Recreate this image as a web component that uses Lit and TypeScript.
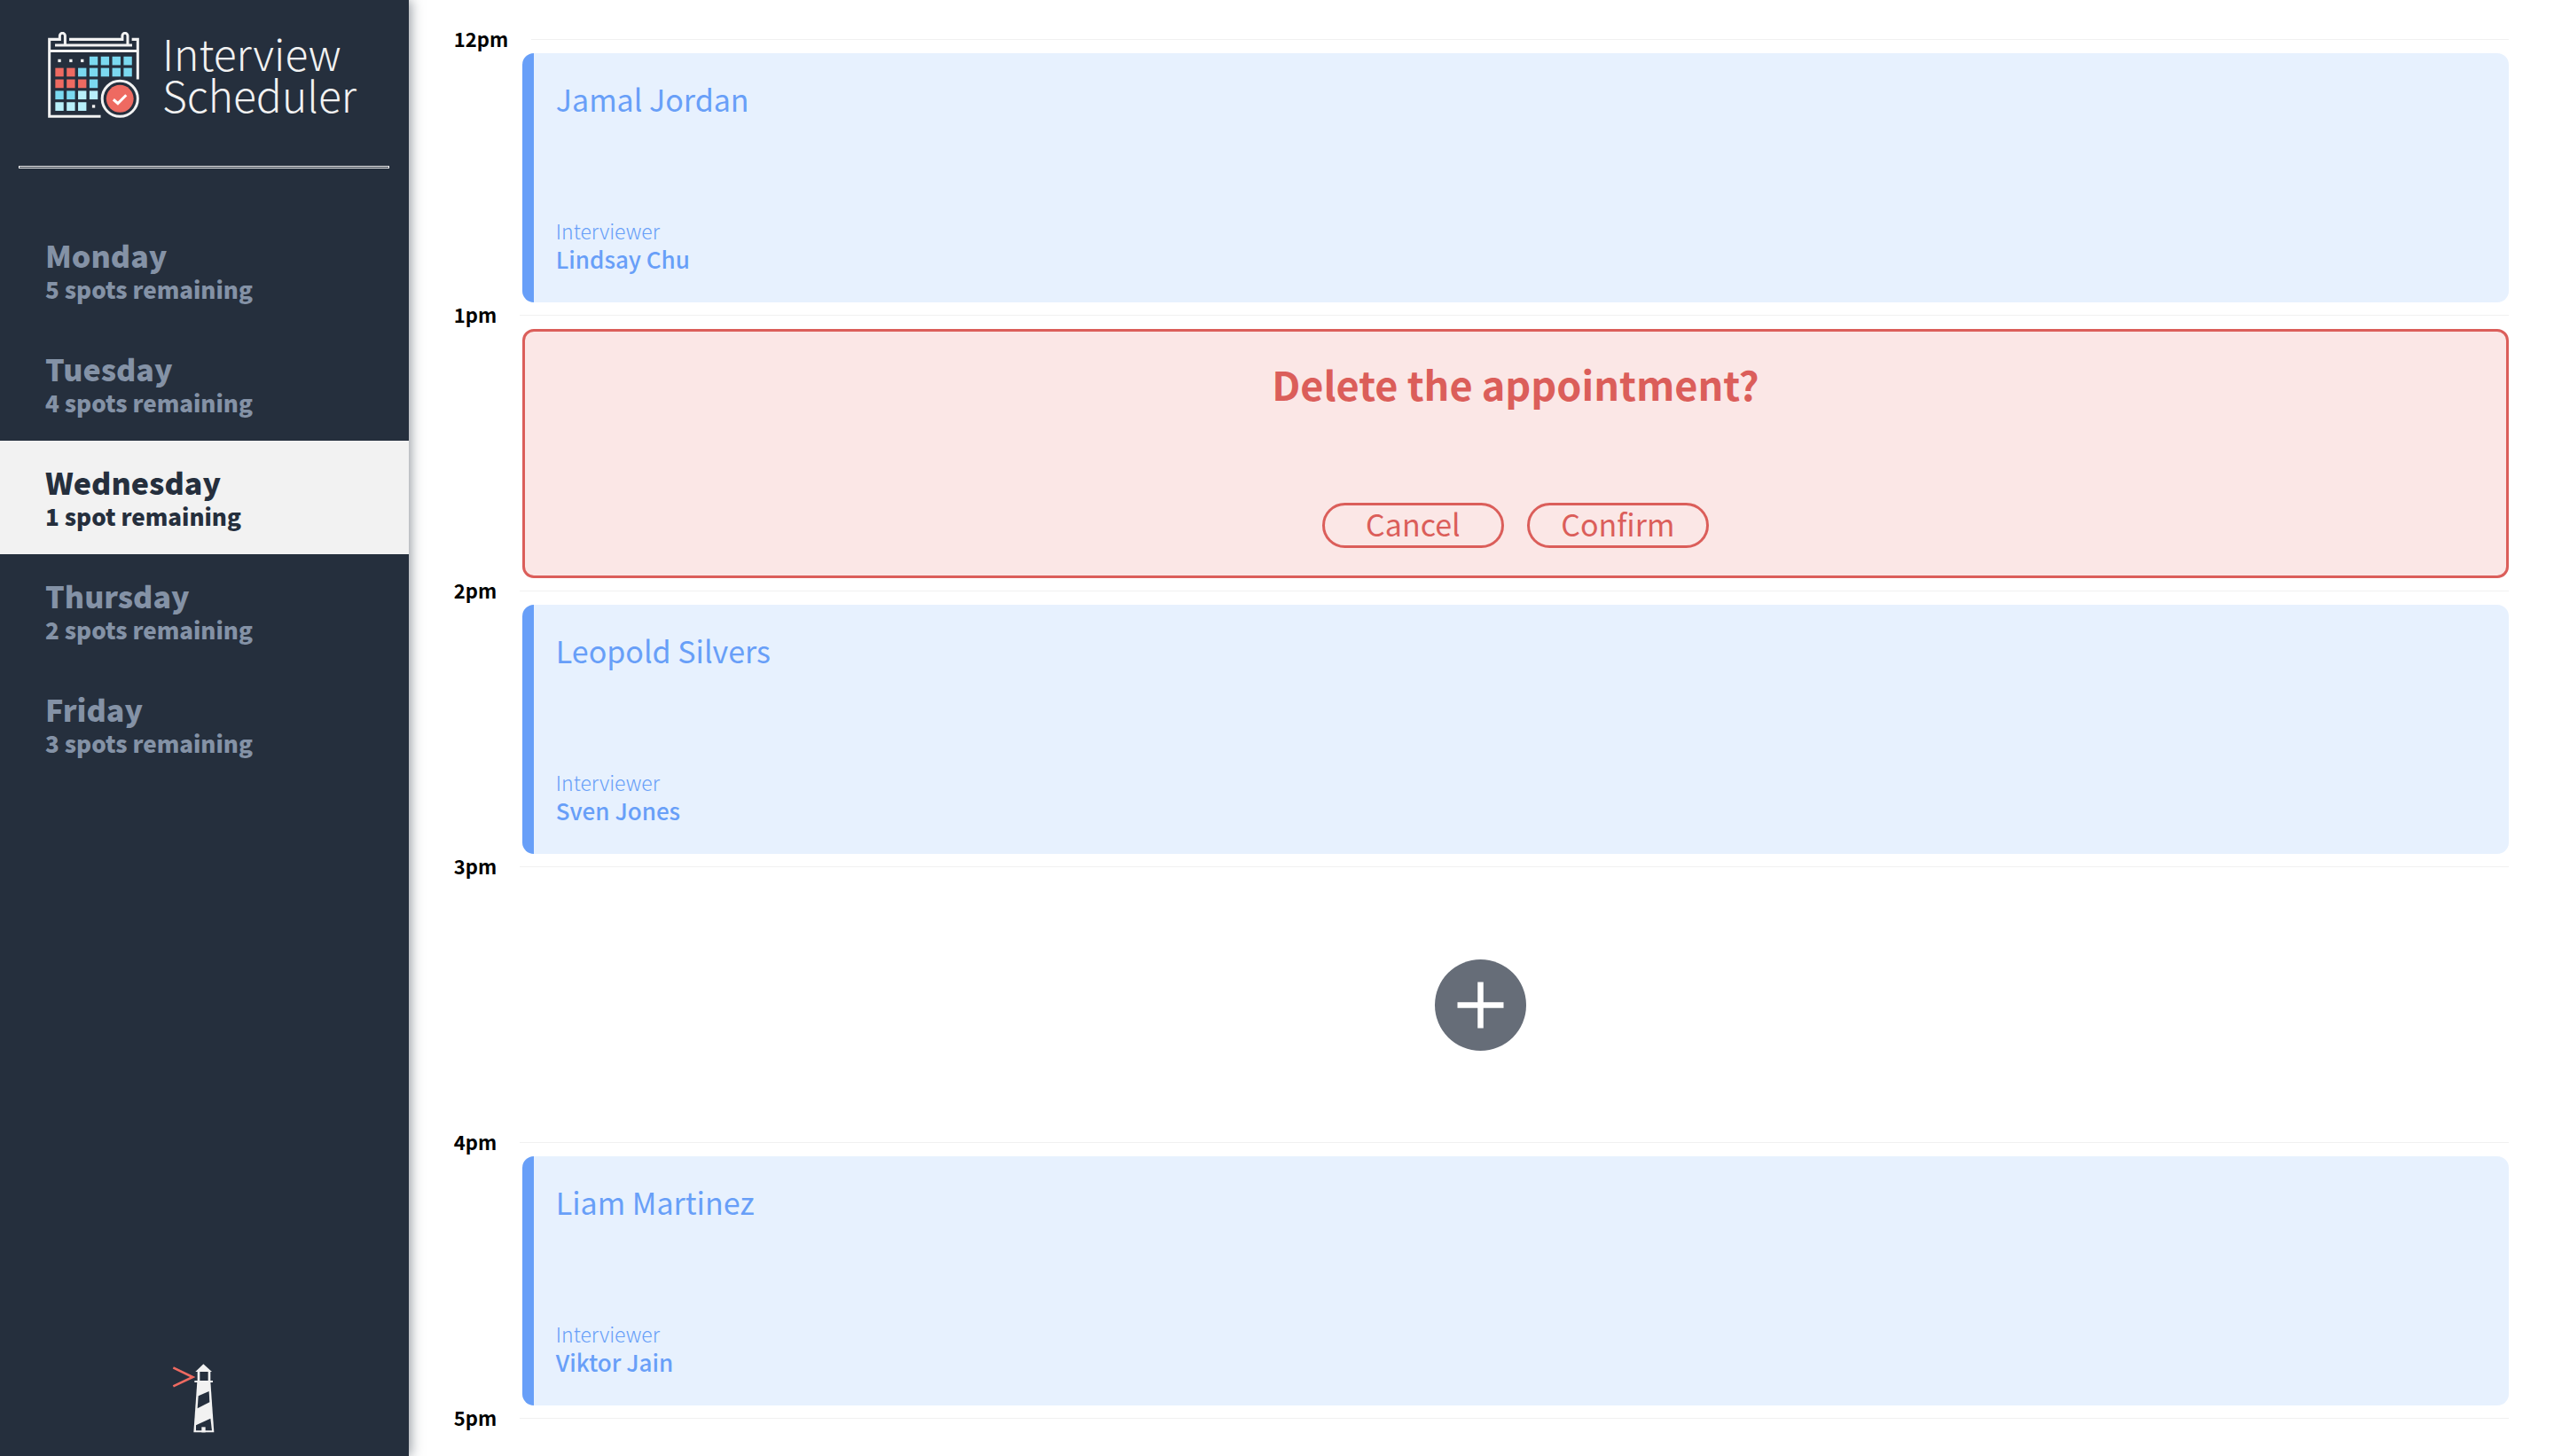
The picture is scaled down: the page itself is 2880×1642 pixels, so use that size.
import { LitElement, html, css, svg } from "lit";
import { customElement, property, state } from "lit/decorators.js";
import { classMap } from "lit/directives/class-map.js";

interface Day {
  name: string;
  spots: number;
}

interface Slot {
  time: string;
  kind: "show" | "confirm" | "empty" | "end";
  student?: string;
  interviewer?: string;
}

const DAYS: Day[] = [
  { name: "Monday", spots: 5 },
  { name: "Tuesday", spots: 4 },
  { name: "Wednesday", spots: 1 },
  { name: "Thursday", spots: 2 },
  { name: "Friday", spots: 3 },
];

const SLOTS: Slot[] = [
  { time: "12pm", kind: "show", student: "Jamal Jordan", interviewer: "Lindsay Chu" },
  { time: "1pm", kind: "confirm" },
  { time: "2pm", kind: "show", student: "Leopold Silvers", interviewer: "Sven Jones" },
  { time: "3pm", kind: "empty" },
  { time: "4pm", kind: "show", student: "Liam Martinez", interviewer: "Viktor Jain" },
  { time: "5pm", kind: "end" },
];

const RED = "#ee6a61";
const CYAN = "#7bd9f0";
const PALE = "#b8f0fa";

// Calendar cells, one string per week: r = red, c = cyan, p = pale, d = dot.
const CELLS = ["dddcccc", "rrccccc", "rrrc", "ccpp", "pppd"];
const CELL_COLORS: Record<string, string> = { r: RED, c: CYAN, p: PALE };

@customElement("scheduler-logo")
export class SchedulerLogo extends LitElement {
  static styles = css`
    :host {
      display: flex;
      align-items: flex-start;
      gap: 26px;
      color: #f2f2f2;
    }
    .icon {
      width: 103px;
      height: 97px;
      flex: none;
    }
    .name {
      font-size: 48px;
      line-height: 47px;
      font-weight: 300;
    }
    .line {
      display: block;
    }
  `;

  render() {
    return html`
      <svg class="icon" viewBox="42 33 308 290" fill="none" aria-hidden="true">
        <g stroke="#f2f2f2" stroke-width="9">
          <path d="M220 318H47V58H82V46a9 9 0 0 1 18 0V77" />
          <path d="M114 58H293V46a9 9 0 0 1 18 0V77" />
          <path d="M325 58H345V193" />
          <path d="M66 78H326M47 97H345" />
          <circle cx="285" cy="258" r="60" />
        </g>
        ${CELLS.map((row, y) =>
          row.split("").map((c, x) =>
            c === "d"
              ? svg`<rect x=${76 + x * 38.4} y=${125 + y * 38.5} width="10" height="10" fill="#f2f2f2" />`
              : svg`<rect x=${67 + x * 38.4} y=${116 + y * 38.5} width="28" height="29" fill=${CELL_COLORS[c]} />`
          )
        )}
        <circle cx="285" cy="258" r="46" fill=${RED} />
        <path d="M263 261L278 274L306 246" stroke="#fff" stroke-width="9" />
      </svg>
      <div class="name"><span class="line">Interview</span><span class="line">Scheduler</span></div>
    `;
  }
}

@customElement("lighthouse-mark")
export class LighthouseMark extends LitElement {
  static styles = css`
    :host {
      display: block;
    }
    .mark {
      display: block;
      width: 49px;
      height: 79px;
    }
  `;

  render() {
    return html`
      <svg class="mark" viewBox="72 80 147 237" fill="none" role="img" aria-label="Lighthouse Labs">
        <path d="M76 96L142 128L76 159" stroke=${RED} stroke-width="8" />
        <path d="M178 84L207 110H151Z" fill="#f2f2f2" />
        <path d="M162 108V143M198 108V143" stroke="#f2f2f2" stroke-width="8" />
        <path d="M148 143H210" stroke="#f2f2f2" stroke-width="6" />
        <path d="M157 144H202L214 315H145Z" fill="#f2f2f2" />
        <path d="M161 192L197 176L199 213L158 234Z" fill="#252f3d" />
        <path d="M153 291L202 268L207 309H153Z" fill="#252f3d" />
        <path d="M172 297H185V315H172Z" fill="#f2f2f2" />
      </svg>
    `;
  }
}

@customElement("day-list")
export class DayList extends LitElement {
  @property() selected = "";

  static styles = css`
    :host {
      display: block;
    }
    .list {
      list-style: none;
      margin: 0;
      padding: 0;
    }
    .day {
      display: block;
      box-sizing: border-box;
      width: 100%;
      margin: 0;
      padding: 28px 51px 24px;
      border: 0;
      background: none;
      color: #8492a6;
      font: inherit;
      font-weight: 900;
      text-align: left;
      cursor: pointer;
    }
    .day.selected {
      background: #f2f2f2;
      color: #252f3d;
    }
    .name,
    .spots {
      display: block;
      line-height: 38px;
    }
    .name {
      font-size: 34px;
    }
    .spots {
      font-size: 26px;
    }
  `;

  private pick(name: string) {
    this.dispatchEvent(new CustomEvent("pick-day", { detail: name }));
  }

  render() {
    return html`<ul class="list">
      ${DAYS.map(
        (d) => html`<li>
          <button
            type="button"
            class=${classMap({ day: true, selected: d.name === this.selected })}
            @click=${() => this.pick(d.name)}
          >
            <span class="name">${d.name}</span>
            <span class="spots">${d.spots} ${d.spots === 1 ? "spot" : "spots"} remaining</span>
          </button>
        </li>`
      )}
    </ul>`;
  }
}

@customElement("appointment-slot")
export class AppointmentSlot extends LitElement {
  @property({ attribute: false }) slotData!: Slot;

  static styles = css`
    :host {
      display: block;
    }
    .header {
      display: flex;
      align-items: center;
      gap: 26px;
      height: 29px;
      margin-bottom: 1px;
    }
    .time {
      margin: 0;
      padding: 0 0 3px 1px;
      font-size: 22px;
      line-height: 26px;
      font-weight: 700;
      color: #000;
    }
    .rule {
      flex: 1;
      height: 1px;
      margin: 0;
      border: 0;
      background: #f0f0f0;
    }
    .card {
      box-sizing: border-box;
      height: 281px;
      margin-left: 78px;
      border-radius: 13px;
      display: flex;
      flex-direction: column;
      justify-content: space-between;
    }
    .show {
      border-left: 13px solid #689ff8;
      background: #e7f1fe;
      color: #689ff8;
      padding: 26px 25px 32px;
    }
    .student {
      margin: 0;
      font-size: 34px;
      line-height: 51px;
      font-weight: 400;
    }
    .label {
      margin: 0;
      font-size: 23px;
      line-height: 30px;
      font-weight: 300;
    }
    .interviewer {
      margin: 0;
      font-size: 26px;
      line-height: 34px;
      font-weight: 500;
    }
    .confirm {
      border: 3px solid #db5e5a;
      background: #fbe7e6;
      color: #db5e5a;
      align-items: center;
      padding: 30px 31px 31px;
    }
    .question {
      margin: 0;
      font-size: 45px;
      line-height: 58px;
      font-weight: 700;
    }
    .actions {
      display: flex;
      gap: 26px;
    }
    .button {
      box-sizing: border-box;
      width: 205px;
      height: 51px;
      padding: 0 0 3px;
      border: 3px solid #db5e5a;
      border-radius: 26px;
      background: none;
      color: inherit;
      font: inherit;
      font-size: 34px;
      line-height: 42px;
      font-weight: 400;
      cursor: pointer;
    }
    .empty {
      height: 281px;
      display: flex;
      align-items: center;
      justify-content: center;
    }
    .add {
      width: 103px;
      height: 103px;
      padding: 0;
      border: 0;
      border-radius: 50%;
      background: #666d78;
      cursor: pointer;
    }
    .plus {
      display: block;
      width: 103px;
      height: 103px;
    }
  `;

  private body() {
    const s = this.slotData;
    if (s.kind === "show") {
      return html`<section class="card show">
        <h2 class="student">${s.student}</h2>
        <div>
          <h4 class="label">Interviewer</h4>
          <h3 class="interviewer">${s.interviewer}</h3>
        </div>
      </section>`;
    }
    if (s.kind === "confirm") {
      return html`<section class="card confirm">
        <h1 class="question">Delete the appointment?</h1>
        <div class="actions">
          <button type="button" class="button">Cancel</button>
          <button type="button" class="button">Confirm</button>
        </div>
      </section>`;
    }
    if (s.kind === "empty") {
      return html`<div class="empty">
        <button type="button" class="add" aria-label="Add">
          <svg class="plus" viewBox="0 0 103 103" aria-hidden="true">
            <path d="M25.5 51.5H77.5M51.5 25.5V77.5" stroke="#fff" stroke-width="6.5" />
          </svg>
        </button>
      </div>`;
    }
    return null;
  }

  render() {
    return html`
      <header class="header">
        <h4 class="time">${this.slotData.time}</h4>
        <hr class="rule" />
      </header>
      ${this.body()}
    `;
  }
}

@customElement("app-root")
export class AppRoot extends LitElement {
  @state() private day = "Wednesday";

  static styles = css`
    :host {
      display: block;
      font-family: "Noto Sans CJK SC", "Noto Sans", sans-serif;
    }
    .layout {
      display: flex;
      height: 100vh;
      overflow: hidden;
      background: #fff;
    }
    .sidebar {
      box-sizing: border-box;
      width: 16%;
      flex: none;
      display: flex;
      flex-direction: column;
      background: #252f3d;
      box-shadow: 2px 0 13px rgba(37, 47, 61, 0.5);
    }
    .brand {
      padding: 36px 54px 54px;
    }
    .divider {
      align-self: stretch;
      height: 1px;
      margin: 0 22px 51px 21px;
      border: 1px solid #f2f2f2;
    }
    .nav {
      flex: 1;
    }
    .foot {
      display: flex;
      justify-content: center;
      padding: 0 24px 26px 0;
    }
    .schedule {
      flex: 1;
      min-width: 0;
      padding: 30px 51px 0 50px;
    }
  `;

  render() {
    return html`
      <main class="layout">
        <aside class="sidebar">
          <scheduler-logo class="brand"></scheduler-logo>
          <hr class="divider" />
          <nav class="nav">
            <day-list
              .selected=${this.day}
              @pick-day=${(e: CustomEvent<string>) => (this.day = e.detail)}
            ></day-list>
          </nav>
          <div class="foot"><lighthouse-mark></lighthouse-mark></div>
        </aside>
        <section class="schedule">
          ${SLOTS.map((s) => html`<appointment-slot .slotData=${s}></appointment-slot>`)}
        </section>
      </main>
    `;
  }
}
